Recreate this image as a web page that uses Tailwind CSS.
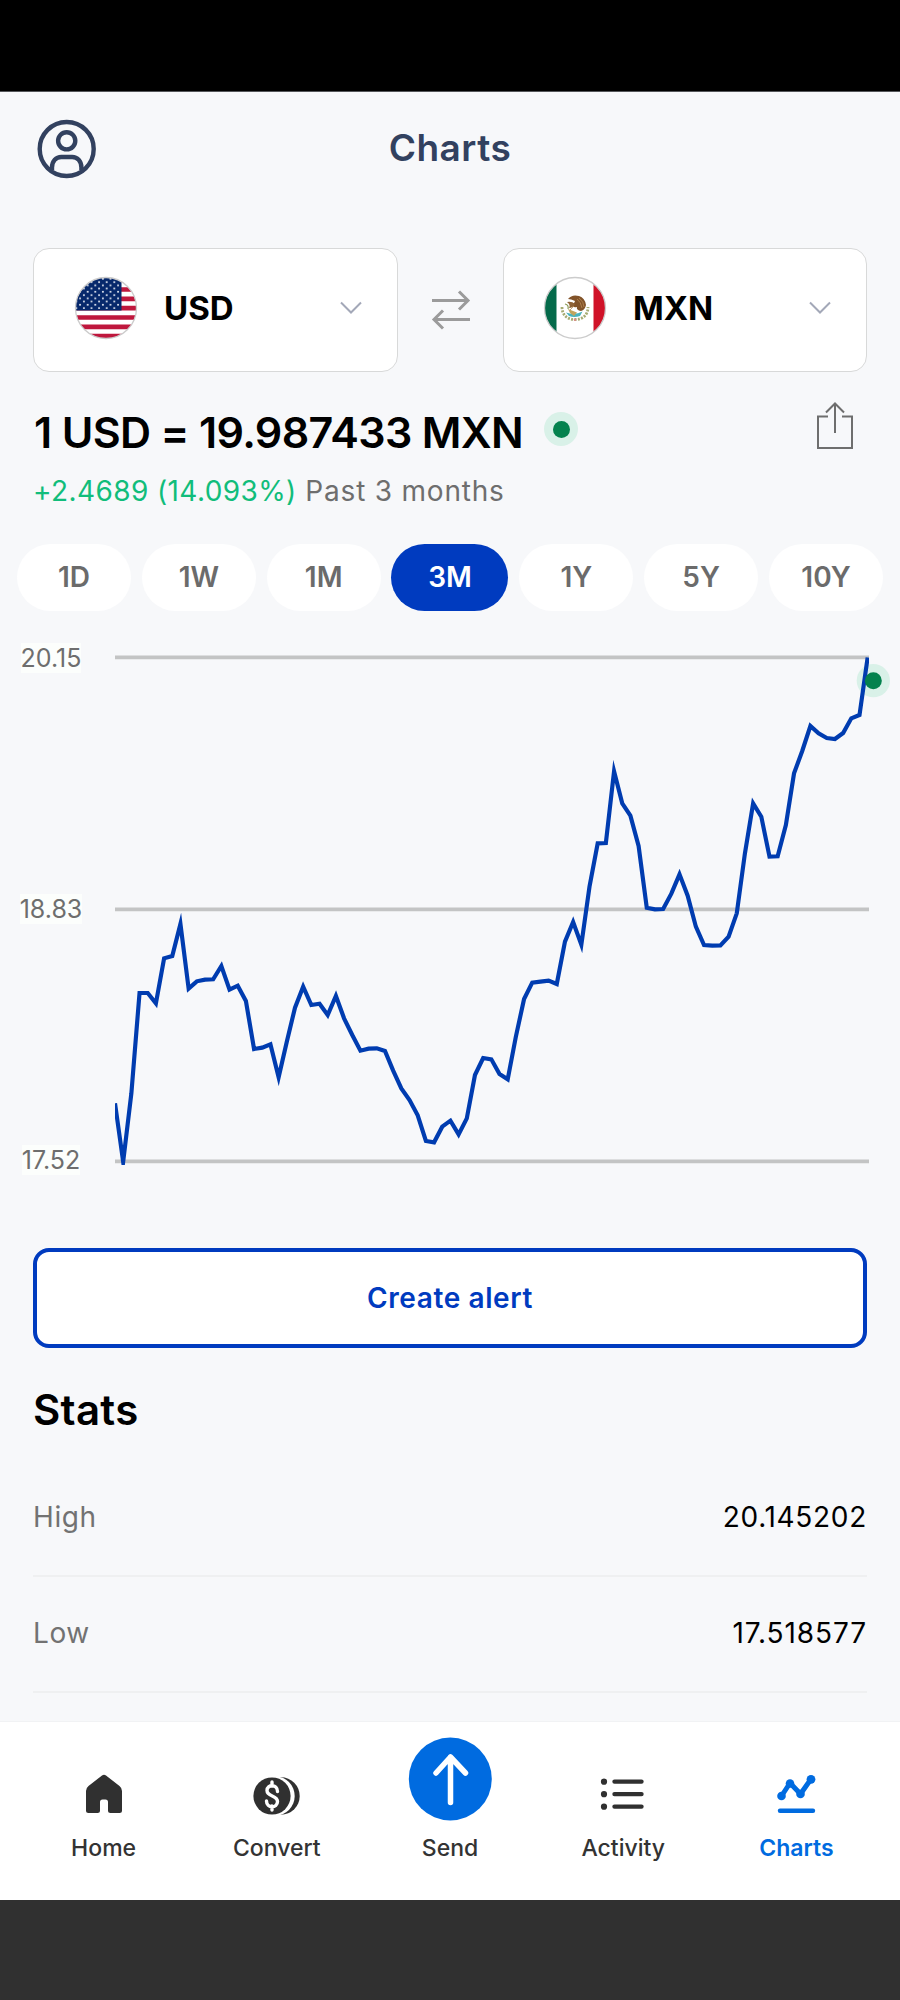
<!DOCTYPE html>
<html lang="en">
<head>
    <meta charset="UTF-8">
    <meta name="viewport" content="width=device-width, initial-scale=1.0">
    <title>Charts - USD to MXN</title>
    <script src="https://cdn.jsdelivr.net/npm/@tailwindcss/browser@4"></script>
</head>
<body class="w-[900px] h-[2000px] overflow-hidden flex flex-col bg-[#f7f8fa] font-['Inter',sans-serif] text-black">
    <div class="h-[92px] shrink-0 bg-black border-b border-[#55575a]"></div>

    <header class="h-[114px] shrink-0 grid grid-cols-3 items-center px-[37px]">
        <svg class="w-[60px] h-[60px]" viewBox="0 0 60 60" fill="none" stroke="#32415f" stroke-width="4.4">
            <circle cx="29.7" cy="30" r="27"/>
            <circle cx="29.7" cy="21.8" r="8.6"/>
            <path d="M15 51V48.500C15 42 19.200 38 24.200 38H35.200C40.200 38 44.400 42 44.400 48.500V51"/>
        </svg>
        <h1 class="pb-[2px] text-center text-[37px] leading-[44px] font-semibold tracking-[0.5px] text-[#32415f]">Charts</h1>
    </header>

    <main class="flex-1 min-h-0 overflow-hidden pt-[42px]">
        <!-- currency pickers -->
        <div class="flex items-center justify-between px-[33px]">
            <button class="w-[365px] h-[124px] flex items-center bg-white border-[1.5px] border-[#d8d9d9] rounded-2xl pl-[40px] pr-[35px] pb-[4px]">
                <svg class="w-[64px] h-[64px]" viewBox="0 0 64 64">
                    <defs>
                        <clipPath id="flag"><circle cx="32" cy="32" r="30.5"/></clipPath>
                        <pattern id="stars" x="4.200" y="1.200" width="7.600" height="6.500" patternUnits="userSpaceOnUse">
                            <circle cx="1.900" cy="1.600" r="1" fill="#f0f3f8"/>
                            <circle cx="5.700" cy="4.850" r="1" fill="#f0f3f8"/>
                        </pattern>
                    </defs>
                    <g clip-path="url(#flag)">
                        <rect width="64" height="64" fill="#fff"/>
                        <path stroke="#bf173d" stroke-width="4.700" d="M0 4.200H64M0 13.500H64M0 22.900H64M0 32.200H64M0 41.500H64M0 50.900H64M0 60.200H64"/>
                        <rect width="47.500" height="34.500" fill="#06286b"/>
                        <rect width="47" height="33" fill="url(#stars)"/>
                    </g>
                    <circle cx="32" cy="32" r="30.500" fill="none" stroke="#ccc" stroke-width="1.300"/>
                </svg>
                <span class="ml-[26px] text-[33px] leading-[40px] font-bold">USD</span>
                <svg class="ml-auto w-[22px] h-[14px]" viewBox="0 0 22 14" fill="none" stroke="#a3a8b8" stroke-width="2"><path d="M1 1.500L11 11.500L21 1.500"/></svg>
            </button>
            <svg class="w-[40px] h-[40px]" viewBox="0 0 40 40" fill="none" stroke="#9b9b9b" stroke-width="3">
                <path d="M1 10.500H37.500M28 1.500L37 10.500L28 19.500M39 29.500H3M12 20.500L3 29.500L12 38.500"/>
            </svg>
            <button class="w-[364px] h-[124px] flex items-center bg-white border-[1.5px] border-[#d8d9d9] rounded-2xl pl-[39px] pr-[35px] pb-[4px]">
                <svg class="w-[64px] h-[64px]" viewBox="0 0 64 64">
                    <g clip-path="url(#flag)">
                        <rect width="64" height="64" fill="#fff"/>
                        <rect width="13.500" height="64" fill="#046a4a"/>
                        <rect x="50.500" width="14" height="64" fill="#d01228"/>
                        <!-- wreath -->
                        <path d="M19 31C19 39 24 43.500 32 43.500S45 39 45 31" fill="none" stroke="#a5ab72" stroke-width="2.800" stroke-dasharray="2 1.300"/>
                        <path d="M23 36.500Q32 39.500 39.500 35.500L37 40Q31 42 26 40Z" fill="#49b3bd"/>
                        <path d="M25 33L34 36.500L31 40L27 37Z" fill="#c0a45d"/>
                        <!-- eagle -->
                        <path d="M25 23Q29 18 36 20Q42 22 43 29Q42 34 38 35Q33 34 34 31Q29 32 29 28Q32 27 32 25Q28 23 25 23Z" fill="#825329"/>
                        <path d="M24 26Q29 25 32 28Q30 32 26 32Q28 29 24 26Z" fill="#8f6236"/>
                        <path d="M34 23Q38 26 39 32M36 22Q41 26 41 31M31 30L27 34" stroke="#b98c55" stroke-width="0.800" fill="none"/>
                        <path d="M22 28Q26 29 25 33" stroke="#8a9a55" stroke-width="1.200" fill="none"/>
                        <circle cx="32" cy="43.800" r="1.300" fill="#d88b86"/>
                    </g>
                    <circle cx="32" cy="32" r="30.500" fill="none" stroke="#ccc" stroke-width="1.300"/>
                </svg>
                <span class="ml-[26px] text-[33px] leading-[40px] font-bold">MXN</span>
                <svg class="ml-auto w-[22px] h-[14px]" viewBox="0 0 22 14" fill="none" stroke="#a3a8b8" stroke-width="2"><path d="M1 1.500L11 11.500L21 1.500"/></svg>
            </button>
        </div>

        <!-- current rate -->
        <div class="flex items-start pl-[34px] pr-[46px] pt-[28px] h-[93px]">
            <div class="mt-[6px] text-[43px] leading-[52px] font-semibold tracking-[-0.65px] whitespace-nowrap">1 USD = 19.987433 MXN</div>
            <div class="ml-[21px] mt-[12px] w-[34px] h-[34px] rounded-full bg-[#d9f1e8] flex items-center justify-center">
                <div class="w-[17px] h-[17px] rounded-full bg-[#04824e]"></div>
            </div>
            <svg class="ml-auto w-[38px] h-[50px]" viewBox="0 0 38 50" fill="none" stroke="#6e6e6e" stroke-width="2">
                <path d="M12 16.500H2V48H36V16.500H26M19 33V4M10 12.500L19 3.500L28 12.500"/>
            </svg>
        </div>
        <p class="px-[33px] pt-[9px] text-[28px] leading-[34px] tracking-[0.8px] text-[#6e6e6e] h-[79px]"><span class="tracking-[0.400px] text-[#11bd7b]">+2.4689 (14.093%)</span> Past 3 months</p>

        <!-- range tabs -->
        <div class="flex justify-between px-[17px] text-[28px] font-semibold text-[#6b6b6b]">
            <button class="w-[114px] h-[67px] pb-[2px] rounded-full bg-white">1D</button>
            <button class="w-[114px] h-[67px] pb-[2px] rounded-full bg-white">1W</button>
            <button class="w-[114px] h-[67px] pb-[2px] rounded-full bg-white">1M</button>
            <button class="w-[117px] h-[67px] pb-[2px] rounded-full bg-[#003bbf] text-white">3M</button>
            <button class="w-[114px] h-[67px] pb-[2px] rounded-full bg-white">1Y</button>
            <button class="w-[114px] h-[67px] pb-[2px] rounded-full bg-white">5Y</button>
            <button class="w-[114px] h-[67px] pb-[2px] rounded-full bg-white">10Y</button>
        </div>

        <!-- chart -->
        <div class="flex pt-[29px] h-[637px]">
            <div class="w-[102px] h-[538px] pt-[3px] pb-[2px] flex flex-col gap-[221px] items-center text-[25px] leading-[30px] text-[#6e6e6e]">
                <span class="bg-[#fcfefc]">20.15</span>
                <span class="bg-[#fcfefc]">18.83</span>
                <span class="bg-[#fcfefc]">17.52</span>
            </div>
            <svg class="w-[798px] h-[540px]" viewBox="306 0 2394 1620" fill="none">
                <clipPath id="plot"><rect x="345" y="52" width="2262" height="1523"/></clipPath>
                <path d="M345 52H2607M345 808H2607M345 1564H2607" stroke="#c3c4c4" stroke-width="11"/>
                <circle cx="2620" cy="122" r="50" fill="#d9f1e8"/>
                <polyline id="rate-line" clip-path="url(#plot)" stroke="#003cb0" stroke-width="12.500" stroke-miterlimit="20"/>
                <circle cx="2620" cy="122" r="25.500" fill="#04824e"/>
            </svg>
        </div>

        <div class="px-[33px]">
            <button class="w-full h-[100px] bg-white border-4 border-[#003bbf] rounded-2xl text-[28px] font-semibold tracking-[0.6px] text-[#003bbf]">Create alert</button>
            <h2 class="mt-[36px] text-[42px] leading-[52px] font-semibold tracking-[0.3px]">Stats</h2>
            <div class="mt-[24px] flex justify-between items-center h-[117px] pb-[2px] border-b-2 border-[#eff0f1] text-[28px] tracking-[0.6px]">
                <span class="text-[#727272]">High</span><span class="tracking-[0.700px]">20.145202</span>
            </div>
            <div class="flex justify-between items-center h-[116px] pb-[2px] border-b-2 border-[#eff0f1] text-[28px] tracking-[0.6px]">
                <span class="text-[#727272]">Low</span><span class="tracking-[0.900px]">17.518577</span>
            </div>
        </div>
    </main>

    <nav class="h-[179px] pt-px shrink-0 bg-white border-t border-[#f1f2f4] grid grid-cols-5 px-[17px] text-center text-[23px] leading-[28px] font-medium text-[#333]">
        <a class="flex flex-col items-center">
            <svg class="w-[48px] h-[83px] mt-[14px] mb-[14px]" viewBox="0 0 48 83" fill="#303030">
                <path d="M22 38.500Q24 37 26 38.500L39.500 49Q42 51 42 54V73.500Q42 76 39.500 76H30.500Q28 76 28 73.500V65Q28 62.500 25.500 62.500H22.500Q20 62.500 20 65V73.500Q20 76 17.500 76H8.500Q6 76 6 73.500V54Q6 51 8.500 49Z"/>
            </svg>
            Home
        </a>
        <a class="flex flex-col items-center">
            <svg class="w-[48px] h-[83px] mt-[14px] mb-[14px]" viewBox="0 0 48 83" fill="#303030">
                <circle cx="28" cy="59" r="18.700"/>
                <circle cx="22" cy="59" r="19.700" fill="#fff"/>
                <circle cx="19" cy="59" r="18.600"/>
                <path d="M19 45V49M19 69V73M24.500 54.500C24.500 47 14 47 14 53.500C14 60 24.500 58 24.500 64.500C24.500 71.500 13.500 71.500 13.500 64" fill="none" stroke="#fff" stroke-width="3.400" stroke-linecap="round"/>
            </svg>
            Convert
        </a>
        <a class="flex flex-col items-center">
            <svg class="w-[84px] h-[84px] mt-[14px] mb-[13px]" viewBox="0 0 84 84" fill="none">
                <circle cx="42.300" cy="42" r="41.500" fill="#006be0"/>
                <path d="M42.500 65.500V20M28 36L42.500 20L57.500 36" stroke="#fff" stroke-width="5.500" stroke-linecap="round" stroke-linejoin="round"/>
            </svg>
            Send
        </a>
        <a class="flex flex-col items-center">
            <svg class="w-[48px] h-[83px] mt-[14px] mb-[14px]" viewBox="0 0 48 83" fill="none" stroke="#303030" stroke-linecap="round">
                <path d="M5 44.500V44.700M5 57V57.200M5 69.500V69.700" stroke-width="6.200"/>
                <path d="M15.500 44.600H42.500M15.500 57.100H42.500M15.500 69.600H42.500" stroke-width="4.400"/>
            </svg>
            Activity
        </a>
        <a class="flex flex-col items-center font-semibold text-[#006be0]">
            <svg class="w-[48px] h-[83px] mt-[14px] mb-[14px]" viewBox="0 0 48 83" fill="#006be0" stroke="#006be0" stroke-linecap="round">
                <path d="M9.500 59L18 46L28.500 57L39 42" fill="none" stroke-width="5" stroke-linejoin="round"/>
                <g stroke="none"><circle cx="9.500" cy="59" r="4.300"/><circle cx="18" cy="46.500" r="4.300"/><circle cx="28.500" cy="57" r="4.300"/><circle cx="39" cy="42.300" r="4.400"/></g>
                <path d="M8 73.700H41" stroke-width="4.400"/>
            </svg>
            Charts
        </a>
    </nav>
    <div class="h-[100px] shrink-0 bg-[#303030]"></div>

    <script>
        // vertical position of each day's rate inside the chart's viewBox
        const rates = [
            1390, 1565, 1360, 1059, 1059, 1090, 955, 948, 852, 1046, 1024, 1019, 1018, 978, 1049, 1037,
            1083, 1227, 1223, 1213, 1312, 1205, 1103, 1040, 1095, 1091, 1125, 1068, 1135, 1185, 1232, 1226,
            1225, 1233, 1292, 1345, 1380, 1426, 1503, 1507, 1460, 1442, 1483, 1435, 1305, 1254, 1258, 1302,
            1318, 1190, 1077, 1028, 1025, 1022, 1032, 905, 846, 914, 740, 610, 609, 394, 490, 527,
            618, 803, 808, 807, 761, 703, 767, 860, 915, 917, 916, 890, 820, 640, 490, 530,
            650, 649, 555, 400, 333, 258, 280, 294, 297, 279, 235, 225, 52
        ];
        const start = 345;
        const step = (2603 - start) / (rates.length - 1);
        document.getElementById('rate-line').setAttribute('points', rates.map((y, i) => (start + i * step).toFixed(1) + ',' + y).join(' '));
    </script>
</body>
</html>
